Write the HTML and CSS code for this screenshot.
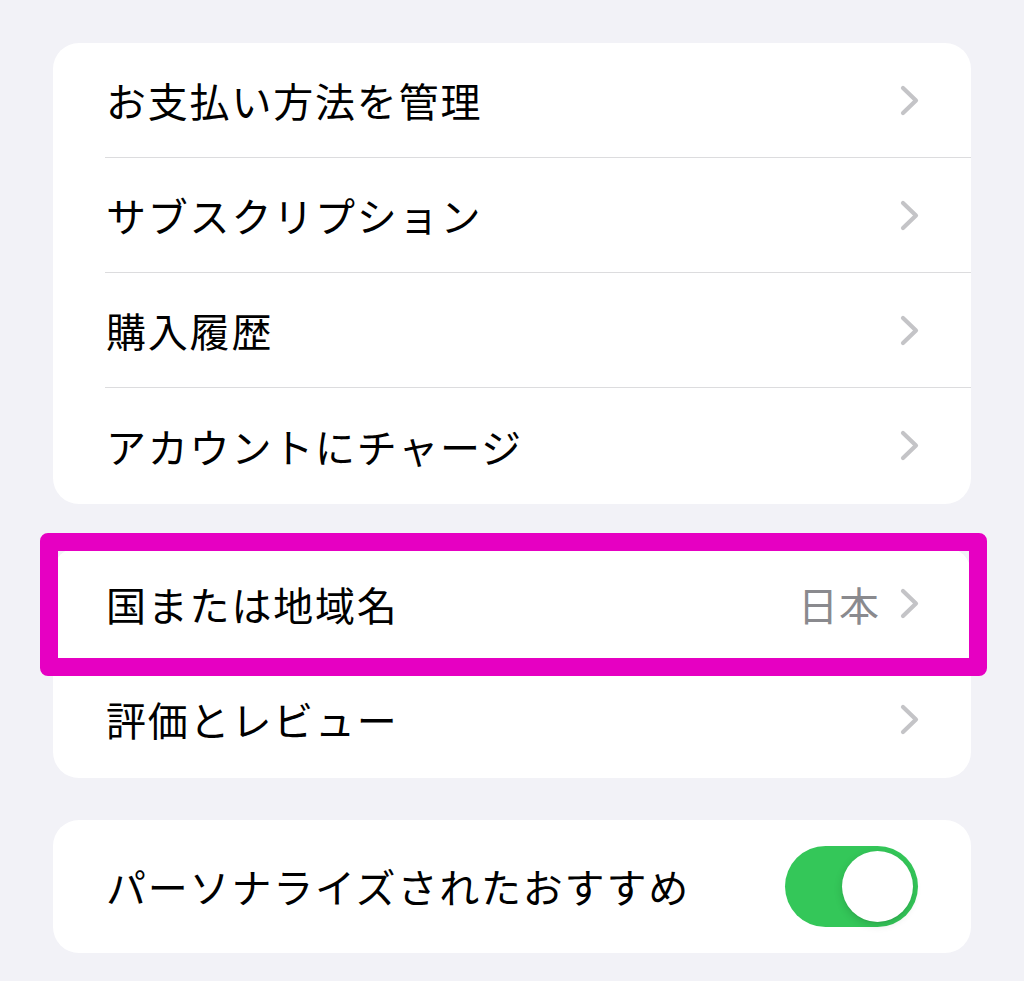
FILE: index.html
```html
<!DOCTYPE html>
<html lang="ja">
<head>
<meta charset="utf-8">
<link rel="stylesheet" href="styles.css">
</head>
<body>
<div class="page">
  <div class="card">
    <div class="row"><div class="row-inner"><span class="label">お支払い方法を管理</span><span class="chev"><svg width="19" height="31" viewBox="0 0 19 31"><polyline points="3,3 16,15.5 3,28" fill="none" stroke="#c4c4c7" stroke-width="4.2" stroke-linecap="round" stroke-linejoin="round"/></svg></span></div></div>
    <div class="row"><div class="row-inner"><span class="label">サブスクリプション</span><span class="chev"><svg width="19" height="31" viewBox="0 0 19 31"><polyline points="3,3 16,15.5 3,28" fill="none" stroke="#c4c4c7" stroke-width="4.2" stroke-linecap="round" stroke-linejoin="round"/></svg></span></div></div>
    <div class="row"><div class="row-inner"><span class="label">購入履歴</span><span class="chev"><svg width="19" height="31" viewBox="0 0 19 31"><polyline points="3,3 16,15.5 3,28" fill="none" stroke="#c4c4c7" stroke-width="4.2" stroke-linecap="round" stroke-linejoin="round"/></svg></span></div></div>
    <div class="row last"><div class="row-inner"><span class="label">アカウントにチャージ</span><span class="chev"><svg width="19" height="31" viewBox="0 0 19 31"><polyline points="3,3 16,15.5 3,28" fill="none" stroke="#c4c4c7" stroke-width="4.2" stroke-linecap="round" stroke-linejoin="round"/></svg></span></div></div>
  </div>

  <div class="card">
    <div class="row highlighted"><div class="row-inner"><span class="label">国または地域名</span><span class="value">日本</span><span class="chev"><svg width="19" height="31" viewBox="0 0 19 31"><polyline points="3,3 16,15.5 3,28" fill="none" stroke="#c4c4c7" stroke-width="4.2" stroke-linecap="round" stroke-linejoin="round"/></svg></span></div><div class="highlight-box"></div></div>
    <div class="row last"><div class="row-inner"><span class="label">評価とレビュー</span><span class="chev"><svg width="19" height="31" viewBox="0 0 19 31"><polyline points="3,3 16,15.5 3,28" fill="none" stroke="#c4c4c7" stroke-width="4.2" stroke-linecap="round" stroke-linejoin="round"/></svg></span></div></div>
  </div>

  <div class="card">
    <div class="row tall last"><div class="row-inner"><span class="label">パーソナライズされたおすすめ</span><span class="toggle"><span class="knob"></span></span></div></div>
  </div>
</div>
</body>
</html>
```

FILE: styles.css
```css
html, body {
  margin: 0;
  padding: 0;
  background: #f2f2f7;
}
body {
  font-family: "Noto Sans CJK JP", "Noto Sans", sans-serif;
  color: #000;
}
.page {
  padding: 43px 53px 0 53px;
  display: flex;
  flex-direction: column;
  gap: 42.5px;
}
.card {
  background: #fff;
  border-radius: 26px;
  padding-bottom: 1px;
}
.row {
  position: relative;
  height: 115px;
  padding-left: 52px;
}
.row.tall {
  height: 132px;
}
.row-inner {
  height: 100%;
  box-sizing: border-box;
  display: flex;
  align-items: center;
  padding-right: 52px;
  border-bottom: 1.5px solid #dcdcde;
}
.row.last .row-inner {
  border-bottom: none;
}
.label {
  flex: 1;
  font-size: 40px;
  line-height: 1;
  letter-spacing: 1.8px;
  padding-left: 1px;
}
.value {
  font-size: 40px;
  line-height: 1;
  color: #8a8a8e;
  margin-right: 20px;
  letter-spacing: 1px;
}
.chev {
  display: flex;
  width: 19px;
  height: 31px;
}
.highlight-box {
  position: absolute;
  top: -14px;
  left: -13px;
  right: -16px;
  bottom: -14px;
  border: 18px solid #e600c2;
  border-radius: 8px;
  pointer-events: none;
}
.toggle {
  position: relative;
  width: 133px;
  height: 81px;
  border-radius: 41px;
  background: #34c759;
  flex: none;
  margin-right: 1px;
}
.knob {
  position: absolute;
  top: 5px;
  right: 5px;
  width: 71px;
  height: 71px;
  border-radius: 50%;
  background: #fff;
  box-shadow: 0 3px 8px rgba(0,0,0,0.15), 0 1px 1px rgba(0,0,0,0.06);
}
```
